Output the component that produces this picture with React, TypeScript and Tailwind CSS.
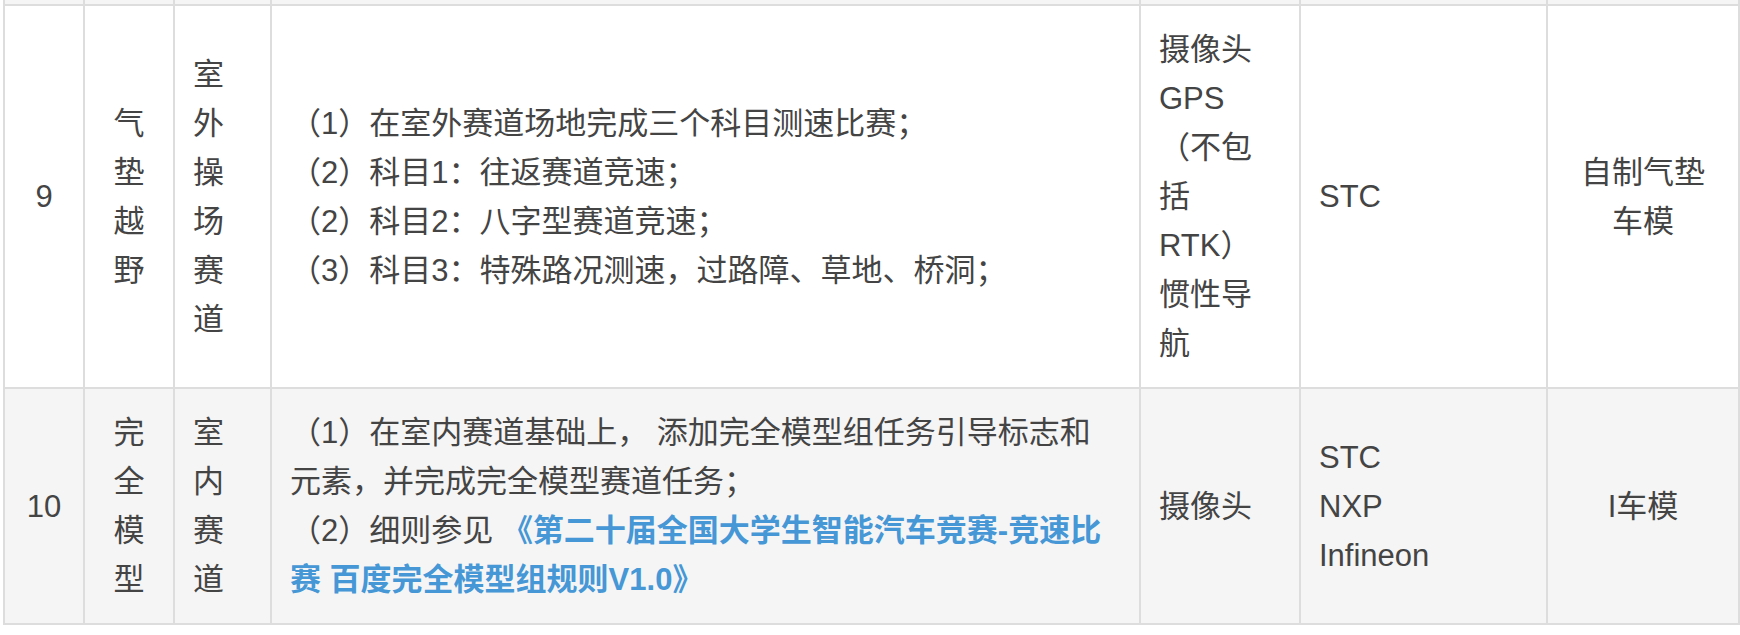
import React from "react";

const Cell = ({
  children,
  className = "",
}: {
  children?: React.ReactNode;
  className?: string;
}) => (
  <div className={`flex flex-col justify-center px-[18px] whitespace-nowrap ${className}`}>
    {children}
  </div>
);

const Lines = ({ lines }: { lines: React.ReactNode[] }) => (
  <>
    {lines.map((l, i) => (
      <div key={i} className="h-[49px] leading-[49px]">
        {l}
      </div>
    ))}
  </>
);

export default function App() {
  const white = "bg-white";
  const grey = "bg-[#f5f5f5]";
  return (
    <div className="w-[1740px] h-[635px] bg-white font-['Liberation_Sans','Noto_Sans_CJK_SC',sans-serif] text-[31px] text-[#444]">
      <div className="ml-[3px] w-[1737px] grid grid-cols-[78px_88px_95px_867px_158px_245px_190px] grid-rows-[4px_381px_234px] gap-[2px] px-[2px] pb-[2px] bg-[#dddddd]">
        {/* sliver of previous row */}
        {Array.from({ length: 7 }).map((_, i) => (
          <div key={i} className={grey} />
        ))}

        {/* Row 9 */}
        <Cell className={`${white} items-center`}>
          <Lines lines={["9"]} />
        </Cell>
        <Cell className={`${white} items-center`}>
          <Lines lines={["气", "垫", "越", "野"]} />
        </Cell>
        <Cell className={white}>
          <Lines lines={["室", "外", "操", "场", "赛", "道"]} />
        </Cell>
        <Cell className={white}>
          <Lines
            lines={[
              "（1）在室外赛道场地完成三个科目测速比赛；",
              "（2）科目1：往返赛道竞速；",
              "（2）科目2：八字型赛道竞速；",
              "（3）科目3：特殊路况测速，过路障、草地、桥洞；",
            ]}
          />
        </Cell>
        <Cell className={white}>
          <Lines lines={["摄像头", "GPS", "（不包", "括", "RTK）", "惯性导", "航"]} />
        </Cell>
        <Cell className={white}>
          <Lines lines={["STC"]} />
        </Cell>
        <Cell className={`${white} items-center`}>
          <Lines lines={["自制气垫", "车模"]} />
        </Cell>

        {/* Row 10 */}
        <Cell className={`${grey} items-center`}>
          <Lines lines={["10"]} />
        </Cell>
        <Cell className={`${grey} items-center`}>
          <Lines lines={["完", "全", "模", "型"]} />
        </Cell>
        <Cell className={grey}>
          <Lines lines={["室", "内", "赛", "道"]} />
        </Cell>
        <Cell className={grey}>
          <Lines
            lines={[
              "（1）在室内赛道基础上， 添加完全模型组任务引导标志和",
              "元素，并完成完全模型赛道任务；",
              <>
                （2）细则参见{" "}
                <a className="font-bold text-[#4597d6] no-underline">
                  《第二十届全国大学生智能汽车竞赛-竞速比
                </a>
              </>,
              <a className="font-bold text-[#4597d6] no-underline">
                赛 百度完全模型组规则V1.0》
              </a>,
            ]}
          />
        </Cell>
        <Cell className={grey}>
          <Lines lines={["摄像头"]} />
        </Cell>
        <Cell className={grey}>
          <Lines lines={["STC", "NXP", "Infineon"]} />
        </Cell>
        <Cell className={`${grey} items-center`}>
          <Lines lines={["I车模"]} />
        </Cell>
      </div>
    </div>
  );
}
